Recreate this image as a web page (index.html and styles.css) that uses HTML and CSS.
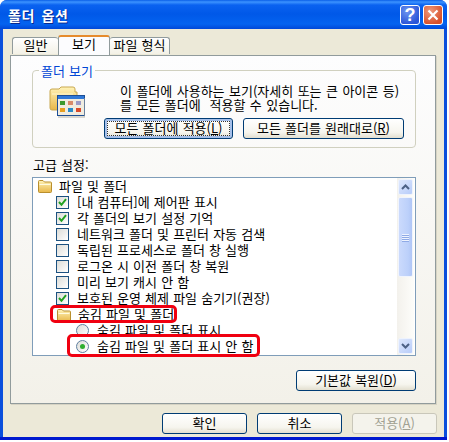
FILE: index.html
```html
<!DOCTYPE html>
<html lang="ko">
<head>
<meta charset="utf-8">
<title>폴더 옵션</title>
<link rel="stylesheet" href="styles.css">
</head>
<body>
<svg class="defs" width="0" height="0" aria-hidden="true">
  <defs>
    <linearGradient id="fold" x1="0" y1="0" x2="0" y2="1">
      <stop offset="0" stop-color="#fff3b8"/><stop offset="1" stop-color="#e8b748"/>
    </linearGradient>
    <symbol id="folder" viewBox="0 0 16 14">
      <path d="M1.5 12.5V2.5Q1.5 1.5 2.5 1.5H6L7.5 3H13.5Q14.5 3 14.5 4V12.5Q14.5 13.5 13.5 13.5H2.5Q1.5 13.5 1.5 12.5Z" fill="url(#fold)" stroke="#b98f2e"/>
      <path d="M2.5 5.5H13.5" stroke="#fffbe0" fill="none"/>
    </symbol>
    <symbol id="check" viewBox="0 0 9 9">
      <path d="M1 4L3.5 6.8L8 1.2" fill="none" stroke="#21a121" stroke-width="2"/>
    </symbol>
  </defs>
</svg>
<div class="window">
  <header class="titlebar">
    <span class="title">폴더 옵션</span>
    <span class="caption help">?</span>
    <span class="caption close">
      <svg width="12" height="12" viewBox="0 0 12 12"><path d="M1.5 1.5L10.5 10.5M10.5 1.5L1.5 10.5" stroke="#fff" stroke-width="2.2" fill="none"/></svg>
    </span>
  </header>
  <div class="body">
    <nav class="tabs">
      <span class="tab tab-first">일반</span>
      <span class="tab tab-active">보기</span>
      <span class="tab tab-last">파일 형식</span>
    </nav>
    <main class="page">
      <fieldset class="group">
        <legend>폴더 보기</legend>
        <div class="group-row">
          <svg class="view-icon" width="36" height="32" viewBox="0 0 36 32">
            <path d="M1 22V5Q1 3 3 3H10L12 1H24Q26 1 26 3V6H28V24H3Q1 24 1 22Z" fill="url(#fold)" stroke="#c9a850"/>
            <path d="M3 8H24" stroke="#fff8d0" fill="none"/>
            <rect x="8.500" y="9.500" width="27" height="20" fill="#f0ece0" stroke="#1c4e96"/>
            <rect x="9" y="10" width="26" height="3" fill="#2f78d8"/>
            <rect x="11" y="15" width="5" height="4" fill="#3c9a2e"/>
            <rect x="19" y="15" width="5" height="4" fill="#d88a6a"/>
            <rect x="27" y="15" width="5" height="4" fill="#9a9ac8"/>
            <rect x="11" y="22" width="5" height="4" fill="#e8a020"/>
            <rect x="19" y="22" width="5" height="4" fill="#2a8ac8"/>
            <rect x="27" y="22" width="5" height="4" fill="#d84a2a"/>
            <path d="M9 31H36V12" stroke="#b8b4a4" fill="none"/>
          </svg>
          <div class="group-main">
            <p class="desc">이 폴더에 사용하는 보기(자세히 또는 큰 아이콘 등)<br>를 모든 폴더에 &nbsp;적용할 수 있습니다.</p>
            <div class="group-buttons">
              <button class="btn btn-default btn-all">모든 폴더에 적용(<u>L</u>)</button>
              <button class="btn btn-reset">모든 폴더를 원래대로(<u>R</u>)</button>
            </div>
          </div>
        </div>
      </fieldset>
      <div class="adv-label">고급 설정:</div>
      <div class="list">
        <ul class="rows">
          <li class="row"><svg class="folder" width="16" height="14"><use href="#folder"/></svg>파일 및 폴더</li>
          <li class="row lvl"><span class="cb"><svg width="9" height="9"><use href="#check"/></svg></span>[내 컴퓨터]에 제어판 표시</li>
          <li class="row lvl"><span class="cb"><svg width="9" height="9"><use href="#check"/></svg></span>각 폴더의 보기 설정 기억</li>
          <li class="row lvl"><span class="cb"></span>네트워크 폴더 및 프린터 자동 검색</li>
          <li class="row lvl"><span class="cb"></span>독립된 프로세스로 폴더 창 실행</li>
          <li class="row lvl"><span class="cb"></span>로그온 시 이전 폴더 창 복원</li>
          <li class="row lvl"><span class="cb"></span>미리 보기 캐시 안 함</li>
          <li class="row lvl"><span class="cb"><svg width="9" height="9"><use href="#check"/></svg></span>보호된 운영 체제 파일 숨기기(권장)</li>
          <li class="row lvl"><svg class="folder sub" width="16" height="14"><use href="#folder"/></svg>숨김 파일 및 폴더</li>
          <li class="row lvl2"><span class="radio"></span>숨김 파일 및 폴더 표시</li>
          <li class="row lvl2"><span class="radio on"></span>숨김 파일 및 폴더 표시 안 함</li>
        </ul>
        <div class="scrollbar">
          <span class="sb-btn"><svg width="9" height="6" viewBox="0 0 9 6"><path d="M1 5L4.500 1.500L8 5" fill="none" stroke="#4d6185" stroke-width="2"/></svg></span>
          <span class="sb-thumb"><i></i><i></i><i></i><i></i></span>
          <span class="sb-btn sb-down"><svg width="9" height="6" viewBox="0 0 9 6"><path d="M1 1L4.500 4.500L8 1" fill="none" stroke="#4d6185" stroke-width="2"/></svg></span>
        </div>
        <span class="mark mark-folder"></span>
        <span class="mark mark-radio"></span>
      </div>
      <div class="restore-row"><button class="btn btn-restore">기본값 복원(<u>D</u>)</button></div>
    </main>
    <footer class="actions">
      <button class="btn btn-action">확인</button>
      <button class="btn btn-action">취소</button>
      <button class="btn btn-action btn-disabled">적용(<u>A</u>)</button>
    </footer>
  </div>
</div>
</body>
</html>
```
FILE: styles.css
```css
* { box-sizing: border-box; }
html, body { margin: 0; padding: 0; background: #fff; }
body {
  width: 449px;
  height: 442px;
  overflow: hidden;
  font-family: "Noto Sans CJK KR", "Liberation Sans", sans-serif;
  font-size: 13px;
  color: #000;
  word-spacing: .5px;
}
.defs { position: absolute; }
.window {
  width: 447px;
  height: 440px;
  display: flex;
  flex-direction: column;
  background: #0a4fdc;
  border-radius: 7px 7px 0 0;
  overflow: hidden;
  padding: 0 3px 3px;
  box-shadow: inset 0 -3px 0 #0019cf;
}
.titlebar {
  height: 29px;
  margin: 0 -3px;
  padding: 5px 4px 4px 8px;
  display: flex;
  align-items: center;
  gap: 3px;
  background: linear-gradient(#0a5fe8 0, #3c93ff 2px, #0a62f0 5px, #0058e8 14px, #0463f0 24px, #0048d8 29px);
}
.title {
  flex: 1;
  color: #fff;
  font-weight: 700;
  font-size: 14px;
  line-height: 20px;
  text-shadow: 1px 1px 0 #0a2a90;
  letter-spacing: .6px;
  word-spacing: 2px;
}
.caption {
  width: 20px;
  height: 20px;
  border: 1px solid #fff;
  border-radius: 3px;
  display: flex;
  align-items: center;
  justify-content: center;
  color: #fff;
}
.help {
  background: radial-gradient(circle at 35% 30%, #6d96f0, #2a55d8 75%);
  font: 700 18px/18px "Liberation Sans", sans-serif;
}
.close { background: radial-gradient(circle at 35% 30%, #ef9a7c, #d8502a 75%); }
.body {
  flex: 1;
  min-height: 0;
  background: #ece9d8;
  padding: 6px 7px 0;
}
.tabs {
  height: 20px;
  display: flex;
  align-items: flex-end;
  padding-left: 2px;
  position: relative;
  z-index: 1;
}
.tab {
  height: 17px;
  margin-bottom: 1px;
  border: 1px solid #919b9c;
  border-bottom: 0;
  border-radius: 3px 3px 0 0;
  background: linear-gradient(#fff, #f3f1e6);
  text-align: center;
  line-height: 14px;
}
.tab-first { width: 46px; border-right: 0; }
.tab-active {
  width: 52px;
  height: 20px;
  margin-bottom: 0;
  background: #fcfcfe;
  border-top: 2px solid #e68b2c;
  line-height: 13px;
  padding-bottom: 2px;
}
.tab-last { width: 60px; border-left: 0; }
.page {
  height: 349px;
  width: 426px;
  border: 1px solid #919b9c;
  box-shadow: 1px 1px 0 #d6d3c4;
  background: linear-gradient(#fdfdfe, #f3f1e9);
  padding: 8px 19px 0 21px;
}
.group {
  margin: 0;
  width: 384px;
  height: 84px;
  padding: 0;
  border: 1px solid #d0d0bf;
  border-radius: 4px;
  min-inline-size: 0;
}
.group legend {
  margin-left: 6px;
  padding: 0 2px;
  color: #0046d5;
  line-height: 13px;
  font-size: 13px;
}
.group-row { display: flex; padding: 7px 0 0 16px; }
.view-icon { margin-top: 2px; flex: none; }
.group-main { margin-left: 35px; }
.desc { margin: 0; line-height: 14px; white-space: nowrap; word-spacing: .8px; }
.group-buttons { display: flex; gap: 10px; margin: 6px 0 0 -16px; }
.btn {
  height: 21px;
  padding: 0 0 2px;
  border: 1px solid #003c74;
  border-radius: 3px;
  background: linear-gradient(#fff, #f6f5ee 70%, #e3dfd0);
  font: inherit;
  word-spacing: inherit;
  line-height: 16px;
  color: #000;
}
.btn-default { box-shadow: inset 0 0 0 2px #a6c0ea; outline: 1px dotted #333; outline-offset: -4px; }
.btn-all { width: 129px; }
.btn-reset { width: 161px; }
.adv-label { margin: 10px 0 0 1px; line-height: 14px; height: 15px; }
.list {
  position: relative;
  margin-top: 4px;
  width: 384px;
  height: 179px;
  border: 1px solid #7f9db9;
  background: #fff;
  display: flex;
  justify-content: space-between;
}
.rows { list-style: none; margin: 0; padding: 1px 0 0 4px; }
.row {
  height: 16px;
  display: flex;
  align-items: flex-start;
  white-space: nowrap;
  line-height: 14px;
}
.folder { margin: 0 6px 0 0; flex: none; }
.folder.sub { margin-top: 1px; }
.lvl { padding-left: 19px; }
.lvl2 { padding-left: 39px; }
.cb {
  width: 13px;
  height: 13px;
  margin: 1px 8px 0 0;
  border: 1px solid #1c5180;
  background: linear-gradient(135deg, #dcdcd7, #fff);
  display: flex;
  align-items: center;
  justify-content: center;
  flex: none;
}
.radio {
  width: 13px;
  height: 13px;
  margin: 1px 8px 0 0;
  border: 1px solid #5f7f9f;
  border-radius: 50%;
  background: linear-gradient(135deg, #dcdcd7, #fff);
  display: flex;
  align-items: center;
  justify-content: center;
  flex: none;
}
.radio.on::after {
  content: "";
  width: 5px;
  height: 5px;
  border-radius: 50%;
  background: #2fae2f;
}
.scrollbar {
  width: 17px;
  margin-right: 1px;
  padding: 1px 0;
  display: flex;
  flex-direction: column;
  align-items: center;
  background: linear-gradient(90deg, #f3f1ec, #fdfdfa);
}
.sb-btn {
  width: 15px;
  height: 16px;
  flex: none;
  display: flex;
  align-items: center;
  justify-content: center;
  border: 1px solid #eef3fd;
  border-radius: 2px;
  background: linear-gradient(135deg, #dfe8fd, #b7ccf9);
}
.sb-down { margin-top: auto; }
.sb-thumb {
  width: 15px;
  height: 80px;
  margin-top: 2px;
  flex: none;
  display: flex;
  flex-direction: column;
  align-items: center;
  justify-content: center;
  gap: 1px;
  border: 1px solid #f0f4fd;
  border-radius: 2px;
  background: linear-gradient(90deg, #cbdafc, #bcd0fa 70%, #b0c6f6);
}
.sb-thumb i { width: 7px; height: 1px; background: #eef3fe; box-shadow: 0 1px 0 #8faae6; }
.mark {
  position: absolute;
  border: 3px solid #f00010;
  border-radius: 5px;
}
.mark-folder { left: 17px; top: 127px; width: 127px; height: 18px; }
.mark-radio { left: 34px; top: 156px; width: 193px; height: 23px; }
.restore-row { display: flex; justify-content: flex-end; margin-top: 14px; }
.btn-restore { width: 120px; }
.actions { display: flex; justify-content: flex-end; gap: 10px; margin-top: 9px; }
.btn-action { width: 85px; }
.btn-disabled {
  border-color: #c9c7ba;
  background: #f4f3ec;
  color: #a1a192;
}
```
